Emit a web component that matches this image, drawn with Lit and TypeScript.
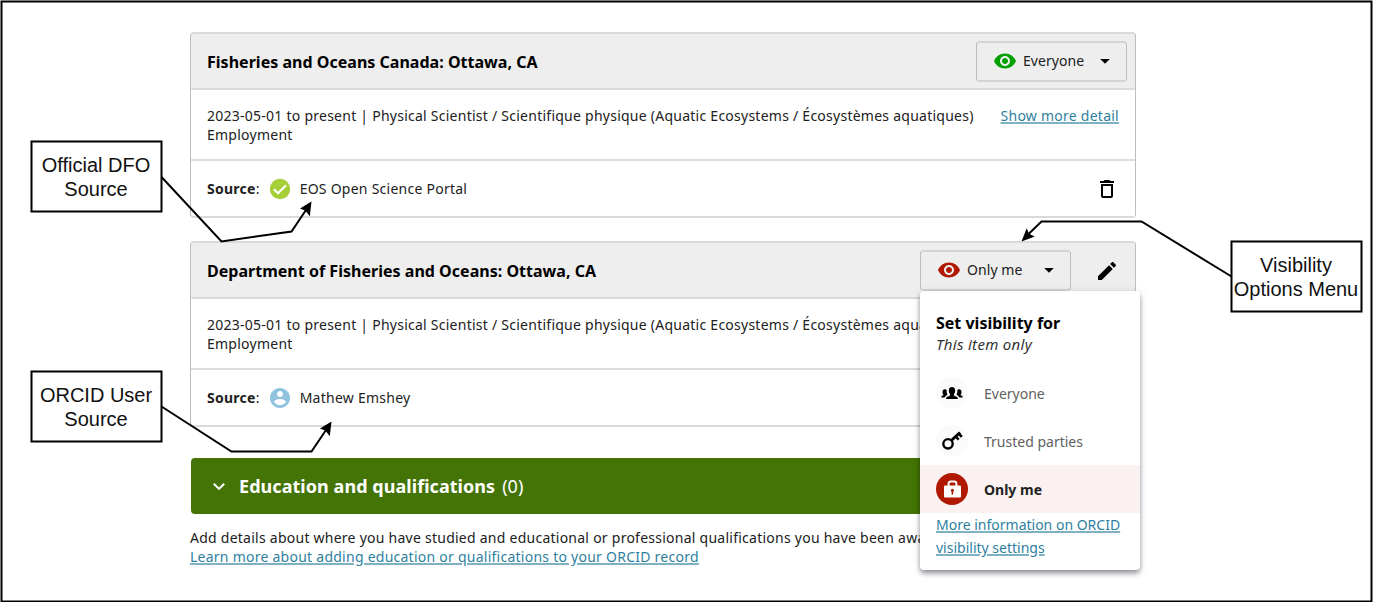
import { LitElement, html, css, svg } from "lit";
import { customElement, property } from "lit/decorators.js";

const eye = svg`<path d="M12 4.5C7 4.5 2.73 7.61 1 12c1.73 4.39 6 7.5 11 7.5s9.27-3.11 11-7.5c-1.73-4.39-6-7.5-11-7.5zM12 17c-2.76 0-5-2.24-5-5s2.24-5 5-5 5 2.24 5 5-2.24 5-5 5zm0-8c-1.66 0-3 1.34-3 3s1.34 3 3 3 3-1.34 3-3-1.34-3-3-3z"/>`;

@customElement("visibility-button")
class VisibilityButton extends LitElement {
  @property() label = "";
  @property() tone = "public";
  static styles = css`
    :host { display: block; }
    .btn {
      box-sizing: border-box; width: 151px; height: 41px; display: flex; align-items: center;
      border: 1px solid #bdbdbd; border-top: 2px solid #d4d4d4; border-bottom: 2px solid #d4d4d4;
      border-radius: 4px; background: #eee; padding: 0 11px 1px 16px;
      font: 14px/20px "Noto Sans", sans-serif; letter-spacing: 0.06px; color: #212121; cursor: pointer;
    }
    .eye { width: 24px; height: 24px; margin-right: 6px; flex: none; }
    .public { fill: #00a000; }
    .private { fill: #b01800; }
    .label { flex: 1; text-align: left; white-space: nowrap; }
    .caret { width: 20px; height: 20px; flex: none; }
  `;
  render() {
    return html`<button class="btn">
      <svg class="eye ${this.tone}" viewBox="0 0 24 24">${eye}</svg>
      <span class="label">${this.label}</span>
      <svg class="caret" viewBox="0 0 20 20"><path d="M5.2 8h9.6L10 12.8z" /></svg>
    </button>`;
  }
}

@customElement("app-root")
class AppRoot extends LitElement {
  static styles = css`
    :host {
      display: block; position: relative; width: 1373px; height: 602px; overflow: hidden;
      background: #fff; font: 14px/19px "Noto Sans", sans-serif; letter-spacing: 0.25px; color: #212121;
    }
    .page { width: 946px; padding: 32px 0 0 190px; }
    .card {
      box-sizing: border-box; height: 186px; border: 1px solid #bdbdbd; border-top: 2px solid #dadada;
      border-bottom: 2px solid #dadada; border-radius: 4px;
      margin-bottom: 23px; display: flex; flex-direction: column;
    }
    .head {
      box-sizing: border-box; height: 56px; background: #eee; border-bottom: 2px solid #dadada;
      border-radius: 2px; display: flex; align-items: center; padding: 0 8px 0 16px; color: #000;
    }
    .title { flex: 1; font-weight: 700; font-size: 16px; letter-spacing: 0.02px; padding-top: 2px; }
    .edit { width: 24px; height: 24px; margin: 1px 8px 0 24px; }
    .info {
      box-sizing: border-box; height: 71px; border-bottom: 2px solid #dcdcdc;
      padding: 16px 16px 0; display: flex; justify-content: space-between; white-space: nowrap;
    }
    .source { flex: 1; display: flex; align-items: center; padding: 0 16px; }
    .badge { width: 24px; height: 24px; margin: 0 8px; }
    .name { flex: 1; }
    .trash { width: 24px; height: 24px; margin-top: 1px; }
    a {
      color: #2e7f9f; text-decoration: underline; text-decoration-color: #7fb0c4;
      text-decoration-thickness: 2px; text-underline-offset: 1px; cursor: pointer;
    }
    .section {
      height: 56px; margin: 31px 0 14px 1px; background: #447405; border-radius: 4px; color: #fff; display: flex;
      align-items: center; padding-left: 16px; font-size: 18px; line-height: 24px; letter-spacing: 0.05px;
    }
    .page > .card:nth-child(2) { margin-bottom: 0; }
    .chevron { width: 24px; height: 24px; margin-right: 8px; }
    .count { font-size: 18px; letter-spacing: 0; margin-left: 7px; }
    .about { white-space: nowrap; }
    .menu {
      position: absolute; left: 920px; top: 291px; width: 220px; height: 279px; background: #fff;
      border-radius: 4px; box-shadow: 0 2px 4px -1px #0003, 0 4px 5px #0024, 0 1px 10px #0000001f;
      letter-spacing: 0;
    }
    .menu-head { padding: 21px 16px 14px; }
    .menu-title { font-weight: 700; color: #000; font-size: 16px; line-height: 22px; }
    .menu-sub { font-style: italic; font-size: 15px; letter-spacing: 0.3px; line-height: 21px; color: #333; }
    .option { height: 48px; display: flex; align-items: center; padding: 0 16px; color: #616161; }
    .disc { width: 32px; height: 32px; margin-right: 16px; }
    .selected { background: #fbf1f0; color: #212121; font-weight: 700; }
    .more { display: block; margin: 0 16px; line-height: 23px; }
    .overlay { position: absolute; inset: 0; width: 1373px; height: 602px; pointer-events: none; }
    .note {
      position: absolute; width: 132px; height: 72px; display: flex; align-items: center;
      justify-content: center; text-align: center; font: 20px/24px "Liberation Sans", sans-serif;
      letter-spacing: 0; color: #111; white-space: nowrap;
    }
    .official { left: 30px; top: 141px; }
    .user { left: 30px; top: 371px; }
    .options { left: 1230px; top: 241px; }
  `;

  private info(detail: boolean) {
    return html`<div class="info">
      <div>2023-05-01 to present | Physical Scientist / Scientifique physique (Aquatic Ecosystems / Écosystèmes ${detail ? "aquatiques)" : "aqua"}<br />Employment</div>
      ${detail ? html`<a>Show more detail</a>` : ""}
    </div>`;
  }

  render() {
    return html`
      <main class="page">
        <section class="card">
          <div class="head">
            <span class="title">Fisheries and Oceans Canada: Ottawa, CA</span>
            <visibility-button label="Everyone"></visibility-button>
          </div>
          ${this.info(true)}
          <div class="source">
            <span><b>Source</b>:</span>
            <svg class="badge" viewBox="0 0 24 24"><circle cx="12" cy="12" r="10.2" fill="#a6ce39" /><path d="M6 12.3l4 4 8-8" fill="none" stroke="#fff" stroke-width="2.2" /></svg>
            <span class="name">EOS Open Science Portal</span>
            <svg class="trash" viewBox="0 0 24 24"><path d="M6 19c0 1.1.9 2 2 2h8c1.1 0 2-.9 2-2V7H6v12zM8 9h8v10H8V9zm7.5-5l-1-1h-5l-1 1H5v2h14V4z" /></svg>
          </div>
        </section>
        <section class="card">
          <div class="head">
            <span class="title">Department of Fisheries and Oceans: Ottawa, CA</span>
            <visibility-button label="Only me" tone="private"></visibility-button>
            <svg class="edit" viewBox="0 0 24 24"><path d="M3 17.25V21h3.75L17.81 9.94l-3.75-3.75L3 17.25zM20.71 7.04c.39-.39.39-1.02 0-1.41l-2.34-2.34c-.39-.39-1.02-.39-1.41 0l-1.83 1.83 3.75 3.75 1.83-1.83z" /></svg>
          </div>
          ${this.info(false)}
          <div class="source">
            <span><b>Source</b>:</span>
            <svg class="badge" viewBox="0 0 24 24"><path d="M12 2C6.48 2 2 6.48 2 12s4.48 10 10 10 10-4.48 10-10S17.52 2 12 2zm0 3c1.66 0 3 1.34 3 3s-1.34 3-3 3-3-1.34-3-3 1.34-3 3-3zm0 14.2c-2.5 0-4.71-1.28-6-3.22.03-1.99 4-3.08 6-3.08 1.99 0 5.97 1.09 6 3.08-1.29 1.94-3.5 3.22-6 3.22z" fill="#8fc3de" /></svg>
            <span class="name">Mathew Emshey</span>
          </div>
        </section>
        <div class="section">
          <svg class="chevron" viewBox="0 0 24 24"><path d="M6.8 9.7l5.2 5.2 5.2-5.2" fill="none" stroke="#fff" stroke-width="2" /></svg>
          <b>Education and qualifications</b><span class="count">(0)</span>
        </div>
        <div class="about">Add details about where you have studied and educational or professional qualifications you have been awarded<br /><a>Learn more about adding education or qualifications to your ORCID record</a></div>
      </main>

      <div class="menu">
        <div class="menu-head">
          <div class="menu-title">Set visibility for</div>
          <div class="menu-sub">This item only</div>
        </div>
        <div class="option">
          <svg class="disc" viewBox="0 0 32 32"><circle cx="16" cy="16" r="16" fill="#fafafa" />
            <path d="M10.2 22v-1.2c0-1.4 3.4-1.6 3.9-2.6v-1c-.9-.9-1.3-2.2-1.3-3.6 0-2.2 1.2-3.5 3.2-3.5s3.2 1.3 3.2 3.5c0 1.4-.4 2.7-1.3 3.6v1c.5 1 3.9 1.2 3.9 2.6V22z" />
            <path d="M5.3 20.5v-.8c0-1 2-1 2.2-1.9-.8-.7-1-1.7-1-2.8 0-1.8.8-2.8 2.3-2.8.9 0 1.600.4 1.900 1-.3 2 .2 3.100.9 4.300-.5.800-2.500 1.300-3 3z" />
            <path d="M26.700 20.500v-.8c0-1-2-1-2.200-1.900.8-.7 1-1.700 1-2.800 0-1.800-.8-2.800-2.300-2.800-.9 0-1.600.4-1.900 1 .3 2-.2 3.100-.9 4.300.5.800 2.500 1.300 3 3z" /></svg>
          Everyone
        </div>
        <div class="option">
          <svg class="disc" viewBox="0 0 32 32"><circle cx="16" cy="16" r="16" fill="#fafafa" />
            <g fill="none" stroke="#000"><circle cx="12" cy="18.800" r="4.700" stroke-width="2.400" /><path d="M15.300 15.500l8.700-8" stroke-width="3" /><path d="M19.800 11.500l2.900 3.200M22.800 8.700l3 3.200" stroke-width="2.600" /></g></svg>
          Trusted parties
        </div>
        <div class="option selected">
          <svg class="disc" viewBox="0 0 32 32"><circle cx="16" cy="16" r="16" fill="#b01800" />
            <path d="M12.600 13V10.800q0-2.200 2.200-2.200h3.400q2.200 0 2.200 2.200V13" fill="none" stroke="#fff" stroke-width="2" /><rect x="8" y="12.500" width="17" height="12" rx="1" fill="#fff" /><circle cx="16.400" cy="17.200" r="1.500" fill="#b01800" /><path d="M15.600 17h1.600v4.600h-1.600z" fill="#b01800" /></svg>
          Only me
        </div>
        <a class="more">More information on ORCID visibility settings</a>
      </div>

      <svg class="overlay" viewBox="0 0 1373 602">
        <g fill="#fff" stroke="#000" stroke-width="2">
          <rect x="1.5" y="1.5" width="1370" height="600" fill="none" />
          <rect x="31.5" y="141.5" width="130" height="70" />
          <rect x="31.5" y="371.5" width="130" height="70" />
          <rect x="1231.5" y="241.5" width="130" height="70" />
          <path fill="none" d="M161.5 177L221.5 241.5 291.5 231.5 306 210M161.5 406.5L231.5 451.5H311.5L326 430M1231.5 276.5L1141.5 221.5H1041.5L1028 234.5" />
        </g>
        <path d="M311.5 201.5L309.8 216.2 305.5 210.7 300 208.5z M331.5 421.5L329.8 436.2 325.5 430.7 320 428.5z M1021.5 241.5L1026.7 228.2 1029 233.8 1034.8 236.6z" />
      </svg>
      <div class="note official">Official DFO<br />Source</div>
      <div class="note user">ORCID User<br />Source</div>
      <div class="note options">Visibility<br />Options Menu</div>
    `;
  }
}
